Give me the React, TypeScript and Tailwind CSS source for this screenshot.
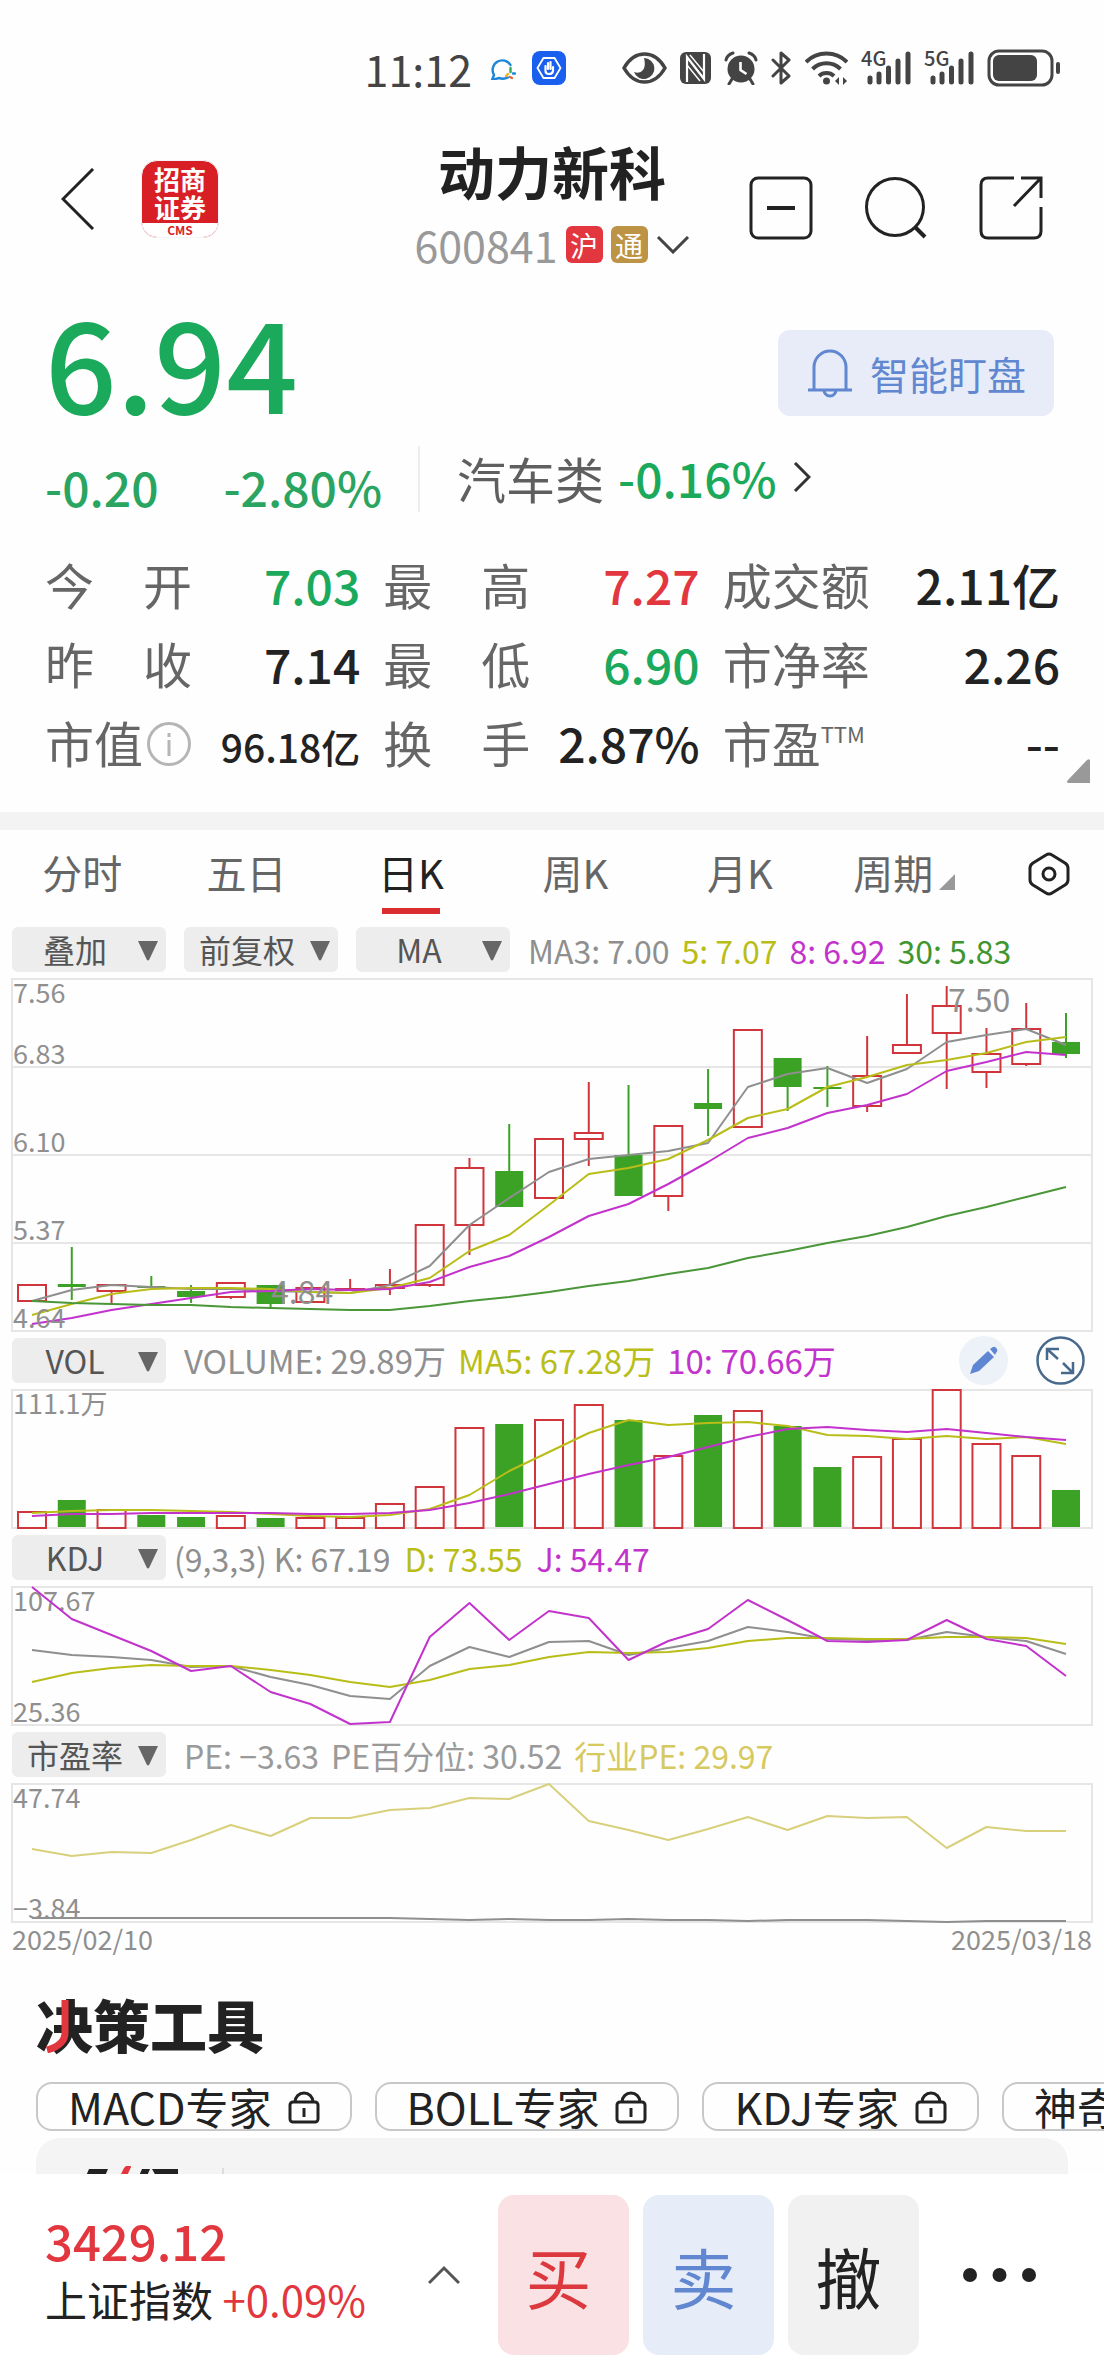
import type { ReactNode } from 'react';

type Point = number[];

// [rising, body top, body bottom, high, low] on the 352 unit tall price panel
const CANDLES: [boolean, number, number, number, number][] = [
	[true, 306, 322, 306, 322],
	[false, 305, 308, 268, 321],
	[true, 306, 312, 306, 325],
	[false, 307, 309, 297, 309],
	[false, 312, 318, 306, 324],
	[true, 304, 318, 304, 320],
	[false, 306, 325, 306, 328],
	[true, 309, 323, 309, 323],
	[true, 310, 311, 300, 311],
	[true, 306, 309, 290, 316],
	[true, 246, 306, 246, 308],
	[true, 189, 246, 179, 276],
	[false, 192, 228, 145, 228],
	[true, 160, 219, 160, 219],
	[true, 154, 160, 103, 187],
	[false, 176, 217, 106, 217],
	[true, 147, 217, 147, 232],
	[false, 124, 130, 90, 157],
	[true, 51, 148, 51, 148],
	[false, 79, 108, 79, 132],
	[false, 108, 110, 87, 128],
	[true, 97, 127, 57, 133],
	[true, 66, 74, 15, 74],
	[true, 27, 54, 7, 110],
	[true, 75, 93, 49, 109],
	[true, 50, 85, 24, 87],
	[false, 63, 75, 34, 79],
];

const MA3 = [322, 311, 306, 308, 310, 310, 312, 313, 314, 306, 287, 246, 219, 193, 180, 176, 172, 164, 108, 95, 89, 104, 90, 63, 56, 50, 66];
const MA5 = [336, 325, 315, 310, 309, 309, 310, 313, 314, 309, 299, 272, 256, 226, 195, 189, 180, 161, 139, 130, 108, 98, 86, 81, 74, 63, 58];
const MA8 = [345, 339, 331, 325, 319, 313, 312, 310, 311, 310, 303, 288, 277, 258, 237, 225, 205, 183, 159, 149, 134, 126, 115, 92, 83, 73, 76];
const MA30 = [322, 324, 325, 326, 326, 328, 329, 330, 331, 331, 327, 322, 318, 313, 307, 302, 295, 289, 279, 272, 264, 257, 248, 237, 228, 218, 208];

const VOLUME = [122, 110, 120, 125, 127, 126, 128, 128, 128, 114, 97, 38, 34, 30, 15, 30, 66, 25, 21, 36, 77, 67, 49, 0, 54, 66, 100];
const VOL5 = [123, 121, 120, 120, 121, 122, 124, 126, 127, 125, 119, 105, 81, 62, 43, 30, 35, 33, 32, 36, 45, 46, 49, 46, 49, 47, 54];
const VOL10 = [126, 124, 124, 123, 123, 123, 123, 124, 124, 123, 120, 113, 104, 94, 84, 75, 67, 57, 47, 39, 37, 40, 42, 39, 43, 47, 50];

const K = [63, 68, 70, 73, 80, 79, 90, 98, 109, 112, 79, 60, 70, 55, 54, 68, 61, 54, 40, 45, 52, 53, 53, 45, 50, 54, 67];
const D = [95, 86, 81, 78, 79, 79, 83, 88, 95, 100, 93, 82, 78, 70, 65, 66, 65, 61, 54, 51, 51, 52, 52, 50, 50, 51, 57];
const J = [0, 32, 48, 64, 84, 79, 105, 117, 137, 135, 50, 16, 53, 24, 31, 73, 54, 42, 13, 33, 54, 55, 53, 33, 52, 59, 89];

const INDUSTRY_PE = [65, 72, 68, 69, 56, 41, 52, 34, 34, 26, 24, 14, 15, 0, 37, 46, 56, 45, 33, 46, 32, 34, 33, 64, 43, 47, 47];
const PE = [134, 134, 134, 134, 134, 134, 134, 134, 134, 134, 135, 136, 135, 136, 136, 135, 136, 136, 137, 136, 136, 136, 137, 138, 137, 137, 137];

const GRAY = '#8f8f8f';
const YELLOW = '#b9bd18';
const PURPLE = '#c233cc';
const RED = '#d0353c';
const GREEN = '#3ca226';
const SAND = '#d8d07c';

const slotX = (i: number) => 20 + (i * 1034) / 26;

function Line({ data, color }: { data: Point; color: string }) {
	const points = data.map((y, i) => `${slotX(i)},${y}`).join(' ');
	return <polyline points={points} fill="none" stroke={color} strokeWidth="2" strokeLinejoin="round" />;
}

function Panel({ height, label, children }: { height: number; label: string; children: ReactNode }) {
	return (
		<svg role="img" aria-label={label} viewBox={`0 0 1080 ${height}`} className="block w-full overflow-visible">
			<rect x="0" y="0" width="1080" height={height} fill="none" stroke="#e6e6e6" strokeWidth="2" />
			{children}
		</svg>
	);
}

function AxisLabel({ y, children }: { y: number; children: string }) {
	return (
		<text x="1" y={y} className="text-[27px]" fill="#8f8f8f">
			{children}
		</text>
	);
}

function PriceChart() {
	return (
		<Panel height={352} label="日K">
			{[88, 176, 264].map((y) => (
				<line key={y} x1="0" x2="1080" y1={y} y2={y} stroke="#e6e6e6" strokeWidth="2" />
			))}
			{CANDLES.map(([up, top, bottom, high, low], i) => {
				const x = slotX(i);
				const color = up ? RED : GREEN;
				return (
					<g key={i} stroke={color} strokeWidth="2">
						<line x1={x} x2={x} y1={high} y2={top} />
						<line x1={x} x2={x} y1={bottom} y2={low} />
						{up ? (
							<rect x={x - 14} y={top} width="28" height={bottom - top} fill="none" />
						) : (
							<rect x={x - 14} y={top} width="28" height={bottom - top} fill={GREEN} stroke="none" />
						)}
					</g>
				);
			})}
			<Line data={MA3} color={GRAY} />
			<Line data={MA5} color={YELLOW} />
			<Line data={MA8} color={PURPLE} />
			<Line data={MA30} color="#4a9638" />
			<AxisLabel y={24}>7.56</AxisLabel>
			<AxisLabel y={85}>6.83</AxisLabel>
			<AxisLabel y={173}>6.10</AxisLabel>
			<AxisLabel y={261}>5.37</AxisLabel>
			<AxisLabel y={349}>4.64</AxisLabel>
			<text x="259" y="325" className="text-[32px]" fill="#8f8f8f">4.84</text>
			<text x="936" y="33" className="text-[32px]" fill="#8f8f8f">7.50</text>
		</Panel>
	);
}

function VolumeChart() {
	return (
		<Panel height={138} label="成交量">
			{VOLUME.map((y, i) =>
				CANDLES[i][0] ? (
					<rect key={i} x={slotX(i) - 14} y={y} width="28" height={138 - y} fill="none" stroke={RED} strokeWidth="2" />
				) : (
					<rect key={i} x={slotX(i) - 14} y={y} width="28" height={137 - y} fill={GREEN} />
				),
			)}
			<Line data={VOL5} color={YELLOW} />
			<Line data={VOL10} color={PURPLE} />
			<AxisLabel y={24}>111.1万</AxisLabel>
		</Panel>
	);
}

function IndicatorSelect({ label, value }: { label: string; value: string }) {
	return (
		<div className="relative h-[45px] w-[154px] shrink-0">
			<select
				aria-label={label}
				className="h-full w-full appearance-none rounded-md bg-[#ededed] pr-7 text-[32px] leading-[45px] text-[#555] [text-align-last:center]"
			>
				<option>{value}</option>
			</select>
			<svg viewBox="0 0 20 20" className="pointer-events-none absolute top-3.5 right-2 size-5" fill="#666">
				<path d="M0 0h20L12 17q-2 5-4 0z" />
			</svg>
		</div>
	);
}

function Readout({ color, children }: { color: string; children: ReactNode }) {
	return <span className={`whitespace-nowrap ${color}`}>{children}</span>;
}

function StatusBar() {
	return (
		<div className="flex h-[136px] items-center justify-end gap-14 pr-11 text-[#444]">
			<div className="flex items-center gap-4">
				<span className="text-[43px] leading-none">11:12</span>
				<svg viewBox="0 0 28 24" className="h-6 w-7" fill="none" strokeWidth="2.4" strokeLinecap="round">
					<path d="M20 21.500a11 10 0 0 1-9 .5l-7 2 2-5A9.500 9.500 0 1 1 22.500 9" stroke="#1d86d8" />
					<path d="M22.500 12v4" stroke="#35a853" />
					<path d="M25 17.500h2" stroke="#1d86d8" />
					<path d="M20 18l-2 2" stroke="#f2b01e" />
					<path d="M22 21l2 1" stroke="#e9602c" />
				</svg>
				<svg viewBox="0 0 34 34" className="size-[34px]">
					<rect width="34" height="34" rx="8" fill="#1a5fee" />
					<path d="M11.500 7h11l6 10-6 10h-11l-6-10z" fill="none" stroke="#fff" strokeWidth="1.800" />
					<path d="M13.500 15v5q0 3 3.500 3t4-3v-4M16 18v-6M18.500 18v-7" fill="none" stroke="#fff" strokeWidth="2.200" strokeLinecap="round" />
				</svg>
			</div>
			<div className="flex items-center gap-[13px]">
				<svg viewBox="0 0 45 32" className="h-8 w-[45px]">
					<path d="M2 16Q10 2 22.500 2T43 16Q35 30 22.500 30T2 16z" fill="none" stroke="currentColor" strokeWidth="3.500" />
					<path d="M22 6a10.500 10.500 0 1 1-10 14q6 2 9-2t1-12z" fill="currentColor" />
				</svg>
				<svg viewBox="0 0 31 32" className="h-8 w-[31px]">
					<rect width="31" height="32" rx="6" fill="currentColor" />
					<path d="M7 30V5l17 22V2" fill="none" stroke="#fff" strokeWidth="2.200" />
					<path d="M10 3l14 17M7 13l13 16" stroke="#fff" strokeWidth="1.400" />
				</svg>
				<svg viewBox="0 0 34 34" className="size-[34px]" fill="none" stroke="currentColor">
					<circle cx="17" cy="18" r="13.500" fill="currentColor" stroke="none" />
					<path d="M2 9q1-5 7-7M32 9q-1-5-7-7M8 28l-3 5M26 28l3 5" strokeWidth="3" strokeLinecap="round" />
					<path d="M16.500 11v8l6 4" stroke="#fff" strokeWidth="2.600" />
				</svg>
				<svg viewBox="0 0 21 34" className="h-[34px] w-[21px]" fill="none" stroke="currentColor" strokeWidth="3">
					<path d="M2 9l16 16-8 7V2l8 7L2 25" strokeLinejoin="round" strokeLinecap="round" />
				</svg>
				<svg viewBox="0 0 43 34" className="h-[34px] w-[43px]" fill="none" stroke="currentColor" strokeWidth="4">
					<path d="M1 11a29 29 0 0 1 41 0M7.500 18a20 20 0 0 1 28 0M14 25a11 11 0 0 1 15 0" />
					<circle cx="21.500" cy="30" r="3.500" fill="currentColor" stroke="none" />
					<path d="M34 26v8l-4-4zM38 26v8l4-4z" fill="currentColor" stroke="none" />
				</svg>
				<Signal generation="4G" />
				<Signal generation="5G" />
				<svg viewBox="0 0 73 38" className="h-[38px] w-[73px]">
					<rect x="2" y="2" width="63" height="34" rx="10" fill="none" stroke="currentColor" strokeWidth="3" />
					<rect x="6" y="6" width="44" height="26" rx="6" fill="currentColor" />
					<rect x="69" y="13" width="4" height="12" rx="2" fill="currentColor" />
				</svg>
			</div>
		</div>
	);
}

function Signal({ generation }: { generation: string }) {
	return (
		<svg viewBox="0 0 50 34" className="h-[34px] w-[50px] overflow-visible" stroke="currentColor" strokeWidth="5" strokeLinecap="round">
			<text x="0" y="15" className="text-[20px] font-medium" fill="currentColor" stroke="none">
				{generation}
			</text>
			<path d="M9 27v4M18 23v8M27.500 17v14M37 10v21M47 3v28" />
		</svg>
	);
}

function Header() {
	return (
		<header className="grid grid-cols-[1fr_auto_1fr] px-[61px] pt-1">
			<div className="flex items-center gap-[46px] pb-1.5">
				<button aria-label="返回">
					<svg viewBox="0 0 34 62" className="h-[62px] w-[34px]" fill="none" stroke="#222" strokeWidth="3">
						<path d="M32 1L2 31l30 30" />
					</svg>
				</button>
				<div className="flex h-[78px] w-[78px] flex-col overflow-hidden rounded-2xl border border-gray-100 bg-[#d81f26] text-center font-bold text-white">
					<div className="flex-1 pt-1 text-[26px] leading-[28px]">
						招商
						<br />
						证券
					</div>
					<div className="bg-white text-[12px] leading-[14px] text-[#d81f26]">CMS</div>
				</div>
			</div>
			<div className="flex flex-col items-center">
				<h1 className="text-[57px] leading-[60px] font-bold text-[#222]">动力新科</h1>
				<button className="mt-[26px] flex h-[37px] items-center gap-2 text-[43px] leading-none text-[#999]">
					600841
					<span className="flex size-[37px] items-center justify-center rounded-md bg-[#e2373f] text-[28px] text-white">沪</span>
					<span className="flex size-[37px] items-center justify-center rounded-md bg-[#bd9446] text-[28px] text-white">通</span>
					<svg viewBox="0 0 34 18" className="h-[18px] w-[34px]" fill="none" stroke="#444" strokeWidth="3">
						<path d="M2 1l15 15L32 1" />
					</svg>
				</button>
			</div>
			<div className="flex items-center justify-end gap-[51px] pt-3">
				<button aria-label="移除自选">
					<svg viewBox="0 0 64 64" className="size-16" fill="none" stroke="#222" strokeWidth="3">
						<rect x="2" y="2" width="60" height="60" rx="7" />
						<path d="M18 32h28" strokeWidth="4" />
					</svg>
				</button>
				<button aria-label="搜索">
					<svg viewBox="0 0 64 64" className="size-16" fill="none" stroke="#222" strokeWidth="3">
						<circle cx="31" cy="31" r="28.500" />
						<path d="M51 51l10 10" strokeWidth="4" />
					</svg>
				</button>
				<button aria-label="分享">
					<svg viewBox="0 0 64 64" className="size-16" fill="none" stroke="#222" strokeWidth="3">
						<path d="M35 2H9q-7 0-7 7v46q0 7 7 7h46q7 0 7-7V31" />
						<path d="M42 2h20v20M62 2L35 30" />
					</svg>
				</button>
			</div>
		</header>
	);
}

function Quote() {
	return (
		<section className="pr-[50px] pl-[45px] text-[48px] leading-none">
			<div className="flex items-end justify-between pt-[33px]">
				<strong className="text-[126px] leading-none font-medium text-[#1ba95b]">6.94</strong>
				<button className="mb-1.5 flex h-[86px] items-center gap-4 rounded-xl bg-[#e7ecf8] px-7 text-[39px] text-[#6187d0]">
					<svg viewBox="0 0 48 50" className="h-[50px] w-12" fill="none" stroke="currentColor" strokeWidth="3">
						<path d="M2 42h44M8 42V19a16 16 0 0 1 32 0v23M18 42a6 6 0 0 0 12 0" />
					</svg>
					智能盯盘
				</button>
			</div>
			<div className="mt-6 flex h-[66px]">
				<div className="flex w-[375px] items-end justify-between border-r-2 border-[#ededed] pr-9 pb-0.5 font-medium text-[#2aa561]">
					<span>-0.20</span>
					<span>-2.80%</span>
				</div>
				<a href="#sector" className="flex items-center pb-1 pl-[37px] text-[#5f5f5f]">
					<span className="text-[49px]">汽车类</span>
					<span className="ml-3.5 font-medium text-[#1ba95b]">-0.16%</span>
					<svg viewBox="0 0 18 30" className="ml-4 h-[30px] w-[18px]" fill="none" stroke="#333" strokeWidth="3">
						<path d="M2 1l14 14L2 29" />
					</svg>
				</a>
			</div>
		</section>
	);
}

function Stat({ label, children }: { label: ReactNode; children: ReactNode }) {
	return (
		<div className="flex h-[79px] items-center justify-between">
			<dt className="flex w-[147px] shrink-0 justify-between text-[49px] text-[#666]">{label}</dt>
			<dd className="text-[48px] font-medium whitespace-nowrap text-[#222]">{children}</dd>
		</div>
	);
}

function Stats() {
	return (
		<section className="relative pt-8 pr-[44px] pb-[31px] pl-[45px]">
			<dl className="grid grid-cols-[315fr_316fr_337fr] gap-x-[23px] leading-none">
				<Stat label={<><span>今</span><span>开</span></>}>
					<span className="text-[#1ba95b]">7.03</span>
				</Stat>
				<Stat label={<><span>最</span><span>高</span></>}>
					<span className="text-[#e2373f]">7.27</span>
				</Stat>
				<Stat label="成交额">2.11亿</Stat>
				<Stat label={<><span>昨</span><span>收</span></>}>7.14</Stat>
				<Stat label={<><span>最</span><span>低</span></>}>
					<span className="text-[#1ba95b]">6.90</span>
				</Stat>
				<Stat label="市净率">2.26</Stat>
				<Stat
					label={
						<>
							市值
							<svg viewBox="0 0 46 46" className="mt-1 size-[46px] shrink-0" fill="none" stroke="#b5b5b5" strokeWidth="3">
								<circle cx="23" cy="23" r="20.500" />
								<path d="M23 19v16M23 12v4" />
							</svg>
						</>
					}
				>
					<span className="text-[39px]">96.18亿</span>
				</Stat>
				<Stat label={<><span>换</span><span>手</span></>}>2.87%</Stat>
				<Stat
					label={
						<span className="flex">
							市盈<sup className="top-0 text-[22px] leading-8">TTM</sup>
						</span>
					}
				>
					--
				</Stat>
			</dl>
			<svg viewBox="0 0 24 24" className="absolute right-3.5 bottom-[29px] size-6" fill="#999">
				<path d="M24 2v22H2q-2-1 0-3L21 1q3-2 3 1z" />
			</svg>
		</section>
	);
}

function PeriodTabs() {
	return (
		<nav className="flex h-[84px] text-[40px] leading-none text-[#666]">
			{['分时', '五日', '日K', '周K', '月K'].map((tab) => (
				<button key={tab} className={tab === '日K' ? 'relative flex-3 text-[#222]' : 'flex-3'}>
					{tab}
					{tab === '日K' && <span className="absolute inset-x-0 bottom-0 mx-auto h-1.5 w-[58px] bg-[#d92d2f]" />}
				</button>
			))}
			<button className="flex flex-3 items-center justify-center gap-1.5 pr-2">
				周期
				<svg viewBox="0 0 16 16" className="mt-5 size-4" fill="#999">
					<path d="M16 0v16H0z" />
				</svg>
			</button>
			<button aria-label="设置" className="flex flex-2 items-center justify-center pt-1">
				<svg viewBox="0 0 42 44" className="h-11 w-[42px]" fill="none" stroke="#222" strokeWidth="3">
					<path d="M18 3q3-2 6 0l13 8q3 2 3 5v12q0 3-3 5l-13 8q-3 2-6 0L5 33q-3-2-3-5V16q0-3 3-5z" />
					<circle cx="21" cy="22" r="6" />
				</svg>
			</button>
		</nav>
	);
}

function Charts() {
	return (
		<section className="mt-[13px] flex flex-col gap-[7px] px-3 text-[32px] leading-none">
			<div className="flex items-center gap-[18px]">
				<IndicatorSelect label="叠加" value="叠加" />
				<IndicatorSelect label="复权" value="前复权" />
				<IndicatorSelect label="主图指标" value="MA" />
				<div className="flex gap-3">
					<Readout color="text-[#8f8f8f]">MA3: 7.00</Readout>
					<Readout color="text-[#b9bd18]">5: 7.07</Readout>
					<Readout color="text-[#c233cc]">8: 6.92</Readout>
					<Readout color="text-[#3f9630]">30: 5.83</Readout>
				</div>
			</div>
			<PriceChart />
			<div className="flex h-[45px] items-center gap-[18px]">
				<IndicatorSelect label="副图指标一" value="VOL" />
				<div className="flex gap-3 text-[33px]">
					<Readout color="text-[#8f8f8f]">VOLUME: 29.89万</Readout>
					<Readout color="text-[#b9bd18]">MA5: 67.28万</Readout>
					<Readout color="text-[#c233cc]">10: 70.66万</Readout>
				</div>
				<div className="mr-[7px] ml-auto flex gap-7">
					<button aria-label="画线">
						<svg viewBox="0 0 49 49" className="size-[49px]">
							<circle cx="24.500" cy="24.500" r="24.500" fill="#edf1f8" />
							<path d="M11 38l3-9L29 15l6 6-15 14zM31 13l3-2q2-1 4 2 1 2-1 4l-1 2z" fill="#5f86d2" />
						</svg>
					</button>
					<button aria-label="全屏">
						<svg viewBox="0 0 49 49" className="size-[49px]" fill="none" stroke="#476a8c" strokeWidth="2.500">
							<circle cx="24.500" cy="24.500" r="23" />
							<path d="M22 23L11 13M11 24V13h12M27 27l10 10M37 26v11H25" />
						</svg>
					</button>
				</div>
			</div>
			<VolumeChart />
			<div className="flex h-[45px] items-center gap-2">
				<IndicatorSelect label="副图指标二" value="KDJ" />
				<div className="flex gap-3.5">
					<Readout color="text-[#8f8f8f]">(9,3,3) K: 67.19</Readout>
					<Readout color="text-[#b9bd18]">D: 73.55</Readout>
					<Readout color="text-[#c233cc]">J: 54.47</Readout>
				</div>
			</div>
			<Panel height={138} label="KDJ">
				<AxisLabel y={24}>107.67</AxisLabel>
				<AxisLabel y={135}>25.36</AxisLabel>
				<Line data={K} color={GRAY} />
				<Line data={D} color={YELLOW} />
				<Line data={J} color={PURPLE} />
			</Panel>
			<div className="flex h-[45px] items-center gap-[18px]">
				<IndicatorSelect label="副图指标三" value="市盈率" />
				<div className="flex gap-3">
					<Readout color="text-[#9a9a9a]">PE: −3.63</Readout>
					<Readout color="text-[#9a9a9a]">PE百分位: 30.52</Readout>
					<Readout color="text-[#d6c960]">行业PE: 29.97</Readout>
				</div>
			</div>
			<div>
				<Panel height={138} label="市盈率">
					<AxisLabel y={24}>47.74</AxisLabel>
					<AxisLabel y={135}>−3.84</AxisLabel>
					<Line data={INDUSTRY_PE} color={SAND} />
					<Line data={PE} color={GRAY} />
				</Panel>
				<div className="mt-[3px] flex justify-between text-[27px] text-[#8f8f8f]">
					<time>2025/02/10</time>
					<time>2025/03/18</time>
				</div>
			</div>
		</section>
	);
}

function Tools() {
	return (
		<section className="mt-[43px] pl-9 leading-none">
			<h2 className="relative text-[57px] font-black text-[#222]">
				决策工具
				<svg viewBox="0 0 28 54" className="absolute top-1 left-2.5 h-[54px] w-7" fill="none" stroke="#e2373f" strokeWidth="7">
					<path d="M19 1v33q0 12-18 17" />
				</svg>
			</h2>
			<div className="mt-[30px] flex gap-[23px] text-[43px] text-[#222]">
				{['MACD专家', 'BOLL专家', 'KDJ专家', '神奇九转'].map((tool) => (
					<button key={tool} className="flex h-[49px] shrink-0 items-center gap-4 rounded-2xl border-2 border-[#c8c8c8] px-[30px]">
						{tool}
						<svg viewBox="0 0 32 34" className="h-[34px] w-8" fill="none" stroke="#222" strokeWidth="3">
							<rect x="2" y="12" width="28" height="20" rx="3" />
							<path d="M7 12a9 9 0 0 1 18 0M16 18v9" />
						</svg>
					</button>
				))}
			</div>
			<div className="mt-[7px] mr-9 rounded-t-3xl bg-[#f4f4f4] px-[50px] pt-7 pb-20">
				<svg viewBox="0 0 140 60" className="h-[60px] w-[140px]" fill="#222">
					<path d="M3 3h19l-3 7H0zM56 3h8l-3 7h-8zM66 3h26v7H70z" />
					<path d="M38 2l6-6 1 5-4 9h-7z" fill="#e2373f" />
					<path d="M136 2h2v58h-2z" fill="#ddd" />
				</svg>
			</div>
		</section>
	);
}

function TradeBar() {
	return (
		<footer className="flex h-[202px] shrink-0 items-center bg-white pr-[68px] pl-[45px] leading-none">
			<div className="flex flex-1 items-center justify-between pr-[38px]">
				<div className="flex flex-col gap-3.5 pb-4">
					<span className="text-[49px] font-medium text-[#e2373f]">3429.12</span>
					<span className="text-[42px] whitespace-nowrap text-[#222]">
						上证指数 <span className="text-[#e2373f]">+0.09%</span>
					</span>
				</div>
				<button aria-label="展开指数">
					<svg viewBox="0 0 32 20" className="h-5 w-8" fill="none" stroke="#555" strokeWidth="3">
						<path d="M1 18L16 3l15 15" />
					</svg>
				</button>
			</div>
			<div className="flex gap-3.5 text-[66px]">
				<button className="h-40 w-[131px] rounded-2xl bg-[#fae1e3] pr-2.5 text-[#dc393f]">买</button>
				<button className="h-40 w-[131px] rounded-2xl bg-[#e6ecf8] pr-2.5 text-[#6187d0]">卖</button>
				<button className="h-40 w-[131px] rounded-2xl bg-[#f1f1f1] pr-2.5 text-[#222]">撤</button>
			</div>
			<button aria-label="更多" className="ml-11">
				<svg viewBox="0 0 73 14" className="h-3.5 w-[73px]" fill="#222">
					<circle cx="7" cy="7" r="7" />
					<circle cx="36.500" cy="7" r="7" />
					<circle cx="66" cy="7" r="7" />
				</svg>
			</button>
		</footer>
	);
}

export default function App() {
	return (
		<div className="flex h-screen flex-col bg-[#fefefe] font-['Noto_Sans_CJK_SC',sans-serif]">
			<main className="min-h-0 flex-1 overflow-hidden">
				<StatusBar />
				<Header />
				<Quote />
				<Stats />
				<div className="h-[18px] bg-[#f3f3f3]" />
				<PeriodTabs />
				<Charts />
				<Tools />
			</main>
			<TradeBar />
		</div>
	);
}
